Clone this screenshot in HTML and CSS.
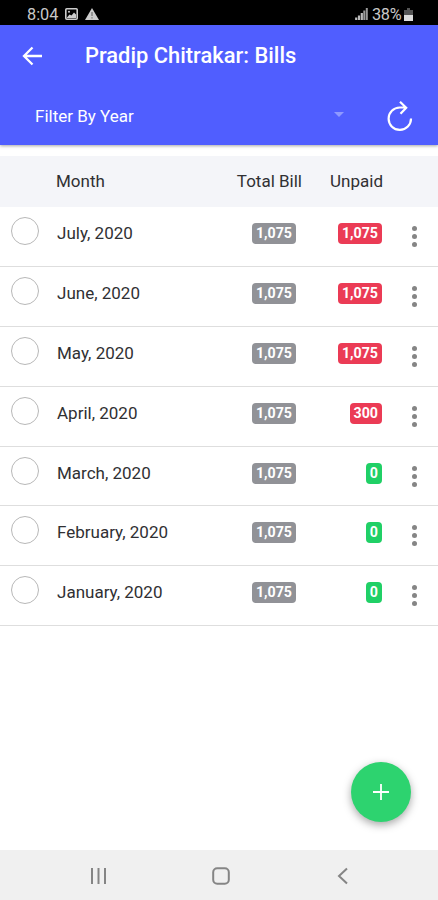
FILE: index.html
```html
<!DOCTYPE html>
<html lang="en">
<head>
  <meta charset="UTF-8">
  <title>Pradip Chitrakar: Bills</title>
  <meta name="viewport" content="width=device-width, initial-scale=1">
  <link rel="stylesheet" href="styles.css">
</head>
<body>

  <div class="statusbar">
    <span class="time">8:04</span>
    <svg class="status-photo" width="13" height="12" viewBox="0 0 13 12">
      <rect x="0.8" y="0.8" width="11.4" height="10.4" rx="1" fill="none" stroke="#ccc" stroke-width="1.6"/>
      <path d="M2 9.500L4.500 6.500L6.500 7.500L9 4.500L11 6.500V10H2Z" fill="#ccc"/>
      <circle cx="4" cy="3.700" r="1" fill="#ccc"/>
    </svg>
    <svg width="14" height="12" viewBox="0 0 14 12">
      <path d="M7 0L14 12H0Z" fill="#ccc"/>
      <path d="M7 4V8M7 9.200V10.500" stroke="#777" stroke-width="1.300"/>
    </svg>
    <svg class="signal" width="13" height="12" viewBox="0 0 13 12">
      <path d="M1.200 12V9.500M4 12V7.500M6.800 12V5" stroke="#bbb" stroke-width="2.200"/>
      <path d="M9.300 12V2.500M11.800 12V0" stroke="#999" stroke-width="2"/>
    </svg>
    <span class="percent">38%</span>
    <svg width="9" height="13" viewBox="0 0 9 13">
      <path d="M3 0H6V2H9V7H0V2H3Z" fill="#555"/>
      <rect y="7" width="9" height="6" fill="#ddd"/>
    </svg>
  </div>

  <header class="toolbar">
    <div class="title-row">
      <svg width="20" height="20" viewBox="0 0 20 20" fill="none" stroke="#fff" stroke-width="2.300">
        <path d="M20 10H2.500M10.500 1.500L2 10L10.500 18.500"/>
      </svg>
      <h1>Pradip Chitrakar: Bills</h1>
    </div>
    <div class="filter-row">
      <span class="filter">Filter By Year</span>
      <svg class="caret" width="10" height="5" viewBox="0 0 10 5">
        <path d="M0 0H10L5 5Z" fill="#8f99ff"/>
      </svg>
      <svg class="refresh" width="26" height="30" viewBox="0 0 26 30" fill="none" stroke="#fff" stroke-width="2.200">
        <path d="M24 17.500A11.200 11.200 0 1 1 12.800 6.500H18.500M13 0.800L19.200 6.800L13.500 12.800"/>
      </svg>
    </div>
  </header>

  <main>
    <div class="list-head">
      <span class="month">Month</span>
      <span class="total">Total Bill</span>
      <span class="unpaid">Unpaid</span>
    </div>

    <div class="row">
      <span class="radio"></span>
      <span class="month">July, 2020</span>
      <span class="total"><b class="badge">1,075</b></span>
      <span class="unpaid"><b class="badge danger">1,075</b></span>
      <span class="more"><i></i><i></i><i></i></span>
    </div>
    <div class="row">
      <span class="radio"></span>
      <span class="month">June, 2020</span>
      <span class="total"><b class="badge">1,075</b></span>
      <span class="unpaid"><b class="badge danger">1,075</b></span>
      <span class="more"><i></i><i></i><i></i></span>
    </div>
    <div class="row">
      <span class="radio"></span>
      <span class="month">May, 2020</span>
      <span class="total"><b class="badge">1,075</b></span>
      <span class="unpaid"><b class="badge danger">1,075</b></span>
      <span class="more"><i></i><i></i><i></i></span>
    </div>
    <div class="row">
      <span class="radio"></span>
      <span class="month">April, 2020</span>
      <span class="total"><b class="badge">1,075</b></span>
      <span class="unpaid"><b class="badge danger">300</b></span>
      <span class="more"><i></i><i></i><i></i></span>
    </div>
    <div class="row">
      <span class="radio"></span>
      <span class="month">March, 2020</span>
      <span class="total"><b class="badge">1,075</b></span>
      <span class="unpaid"><b class="badge success">0</b></span>
      <span class="more"><i></i><i></i><i></i></span>
    </div>
    <div class="row">
      <span class="radio"></span>
      <span class="month">February, 2020</span>
      <span class="total"><b class="badge">1,075</b></span>
      <span class="unpaid"><b class="badge success">0</b></span>
      <span class="more"><i></i><i></i><i></i></span>
    </div>
    <div class="row">
      <span class="radio"></span>
      <span class="month">January, 2020</span>
      <span class="total"><b class="badge">1,075</b></span>
      <span class="unpaid"><b class="badge success">0</b></span>
      <span class="more"><i></i><i></i><i></i></span>
    </div>
  </main>

  <button class="fab" aria-label="Add bill">
    <svg width="16" height="16" viewBox="0 0 16 16" stroke="#fff" stroke-width="1.800">
      <path d="M8 0V16M0 8H16"/>
    </svg>
  </button>

  <nav class="navbar">
    <svg width="18" height="18" viewBox="0 0 18 18" stroke="#858585" stroke-width="2">
      <path d="M2 1V17M8.500 1V17M15 1V17"/>
    </svg>
    <svg width="18" height="18" viewBox="0 0 18 18" fill="none" stroke="#858585" stroke-width="2">
      <rect x="1.200" y="1.200" width="15.600" height="15.600" rx="4"/>
    </svg>
    <svg width="18" height="18" viewBox="0 0 18 18" fill="none" stroke="#858585" stroke-width="2">
      <path d="M13 1.500L5 9L13 16.500"/>
    </svg>
  </nav>

</body>
</html>
```
FILE: styles.css
```css
* {
  box-sizing: border-box;
}

body {
  margin: 0;
  height: 900px;
  display: flex;
  flex-direction: column;
  overflow: hidden;
  background: #fff;
  color: #303033;
  font-family: Roboto, sans-serif;
  font-size: 17px;
}

svg {
  display: block;
  flex: none;
}

.statusbar {
  display: flex;
  align-items: center;
  height: 25px;
  padding: 3px 25px 0 27px;
  background: #000;
  color: #c8c8c8;
  font-size: 16.3px;
}

.time {
  width: 38px;
}

.status-photo {
  margin-right: 7px;
}

.signal {
  margin-left: auto;
  margin-right: 4px;
}

.percent {
  width: 32px;
  letter-spacing: -0.3px;
}

.toolbar {
  height: 120px;
  background: #505eff;
  color: #fff;
  box-shadow: 0 1px 3px rgba(0,0,0,0.35);
}

.title-row {
  display: flex;
  align-items: center;
  height: 61px;
  padding-left: 22px;
}

h1 {
  margin: 0 0 0 43px;
  font-size: 21.9px;
  font-weight: 500;
}

.filter-row {
  display: flex;
  align-items: center;
  height: 59px;
  padding: 0 25px 0 35px;
}

.filter {
  flex: 1;
  font-size: 17px;
}

.caret {
  margin-bottom: 2px;
}

.refresh {
  margin-left: 43px;
}

main {
  flex: 1;
  padding-top: 11px;
}

.list-head,
.row {
  display: grid;
  grid-template-columns: 45px 152px 99px 86px 1fr;
}

.list-head {
  height: 51px;
  align-items: center;
  padding-bottom: 2px;
  background: #f4f5f9;
}

.list-head .month {
  grid-column: 2;
  padding-left: 11px;
}

.total,
.unpaid {
  text-align: right;
}

.list-head .total {
  margin-right: -6px;
}

.list-head .unpaid {
  margin-right: -1px;
}

.row {
  height: 59.9px;
  align-items: start;
  padding-top: 10px;
  border-bottom: 1px solid #dedede;
}

.radio {
  width: 28px;
  height: 28px;
  margin-left: 11px;
  border: 1px solid #b8b8b8;
  border-radius: 50%;
}

.row .month {
  padding: 6px 0 0 12px;
  line-height: 20px;
  white-space: nowrap;
}

.badge {
  display: inline-block;
  height: 21px;
  margin-top: 6px;
  padding: 0 4px;
  border-radius: 4px;
  background: #919297;
  color: #fff;
  font-size: 14.2px;
  font-weight: 700;
  line-height: 21px;
  vertical-align: top;
}

.danger {
  background: #eb3b55;
}

.success {
  background: #20d066;
}

.more {
  display: flex;
  flex-direction: column;
  gap: 3px;
  padding: 9px 0 0 30px;
}

.more i {
  width: 5px;
  height: 5px;
  border-radius: 50%;
  background: #858585;
}

/* floats over the list */
.fab {
  position: absolute;
  right: 27px;
  bottom: 78px;
  display: flex;
  align-items: center;
  justify-content: center;
  width: 60px;
  height: 60px;
  padding: 0;
  border: none;
  border-radius: 50%;
  background: #2dd36f;
  box-shadow: 0 3px 8px rgba(0,0,0,0.35);
}

.navbar {
  display: flex;
  justify-content: space-between;
  align-items: center;
  height: 50px;
  padding: 2px 86px 0 90px;
  background: #f0f0f0;
}
```
